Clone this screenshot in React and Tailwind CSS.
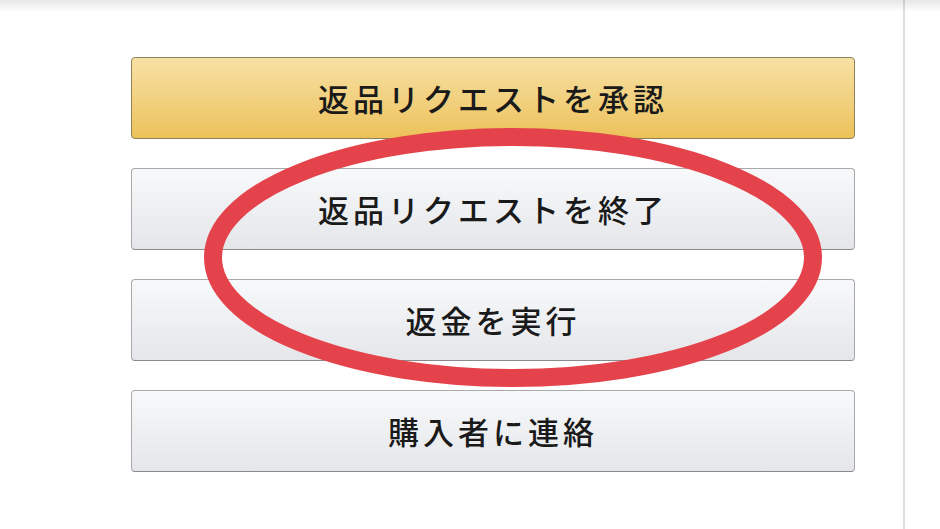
export default function App() {
  const font = { fontFamily: '"Noto Sans CJK JP", "Noto Sans", sans-serif' };
  const gray =
    "h-[82px] w-full rounded-[4px] border border-[#a9a9a9] border-b-[#8a8a8a] bg-gradient-to-b from-[#f8f9fb] to-[#e5e6e9] flex items-center justify-center text-[31px] tracking-[4px] font-medium text-[#1a1a1a]";
  return (
    <div className="relative w-[940px] h-[529px] overflow-hidden bg-white" style={font}>
      <div className="flex h-full">
        <div className="w-[903px] pt-[57px] pl-[131px] pr-[48px]">
          <div className="flex flex-col gap-[29px] w-[724px]">
            <div className="h-[82px] w-full rounded-[4px] border border-[#8c8256] bg-gradient-to-b from-[#f7e1a4] to-[#ecc158] flex items-center justify-center text-[31px] tracking-[4px] font-medium text-[#1a1a1a]">
              返品リクエストを承認
            </div>
            <div className={gray}>返品リクエストを終了</div>
            <div className={gray}>返金を実行</div>
            <div className={gray}>購入者に連絡</div>
          </div>
        </div>
        <div className="w-[2px] h-full bg-[#dedede]" />
        <div className="flex-1 bg-white" />
      </div>
      <div className="absolute left-0 top-0 w-full h-[12px] bg-gradient-to-b from-[#00000018] to-transparent pointer-events-none" />
      <svg className="absolute left-0 top-0 pointer-events-none" width="940" height="529">
        <ellipse cx="513" cy="257.5" rx="300" ry="120.5" fill="none" stroke="#e5434b" strokeWidth="18" />
      </svg>
    </div>
  );
}
